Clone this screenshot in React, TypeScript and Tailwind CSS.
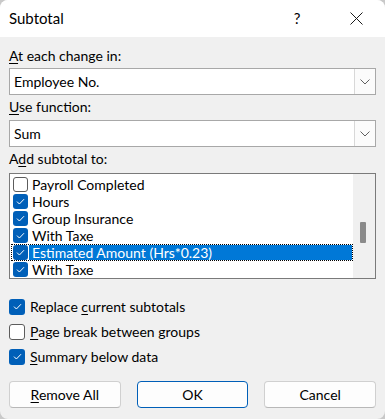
import React from 'react'

const font = { fontFamily: '"Segoe UI", Lato, "Noto Sans", sans-serif' }

function Check({ checked, size = 15 }: { checked: boolean; size?: number }) {
  const box = size === 16 ? 'w-[16px] h-[16px]' : 'w-[15px] h-[15px]'
  if (!checked)
    return <span className={`${box} block shrink-0 rounded-[3px] border border-[#5c5c5c] bg-white`} />
  return (
    <span className={`${box} shrink-0 rounded-[3px] bg-[#005fb8] flex items-center justify-center`}>
      <svg width="9" height="7" viewBox="0 0 9 7" fill="none">
        <path d="M1 3.6 L3.4 6 L8 1.2" stroke="white" strokeWidth="1" />
      </svg>
    </span>
  )
}

function Chevron() {
  return (
    <svg width="10" height="6" viewBox="0 0 10 6" fill="none">
      <path d="M0.5 0.5 L5 5 L9.5 0.5" stroke="#606060" strokeWidth="1" />
    </svg>
  )
}

function Dropdown({ value }: { value: string }) {
  return (
    <div className="h-[27px] flex border border-[#a8a8a8] bg-white">
      <div className="flex-1 flex items-center pl-[4px] text-[14px] text-black">{value}</div>
      <div className="w-[21px] flex items-center justify-center border-l border-[#d8d8d8] bg-[#fbfbfb]">
        <Chevron />
      </div>
    </div>
  )
}

const items = [
  { label: 'Payroll Completed', checked: false },
  { label: 'Hours', checked: true },
  { label: 'Group Insurance', checked: true },
  { label: 'With Taxe', checked: true },
  { label: 'Estimated Amount (Hrs*0.23)', checked: true, selected: true },
  { label: 'With Taxe', checked: true },
]

export default function App() {
  return (
    <div className="w-[385px] h-[419px] bg-[#c9c9c9]" style={font}>
      <div className="h-full rounded-[8px] overflow-hidden bg-[#f0f0f0] flex flex-col text-black">
        <div className="h-[37px] shrink-0 bg-white flex items-center pl-[9px]">
          <span className="text-[15px] flex-1">Subtotal</span>
          <span className="text-[15px] w-[60px] text-center pl-[4px]">?</span>
          <span className="w-[60px] flex justify-center pl-[2px]">
            <svg width="13" height="13" viewBox="0 0 13 13" fill="none">
              <path d="M0.5 0.5 L12.5 12.5 M12.5 0.5 L0.5 12.5" stroke="#1a1a1a" strokeWidth="1" />
            </svg>
          </span>
        </div>

        <div className="px-[9px] text-[14px] leading-[20px]">
          <div className="mt-[9px]"><span className="underline underline-offset-2">A</span>t each change in:</div>
          <div className="mt-[2px]"><Dropdown value="Employee No." /></div>

          <div className="mt-[2px]"><span className="underline underline-offset-2">U</span>se function:</div>
          <div className="mt-[3px]"><Dropdown value="Sum" /></div>

          <div className="mt-[2px]">A<span className="underline underline-offset-2">d</span>d subtotal to:</div>
          <div className="mt-[4px] h-[106px] border border-[#7a7a7a] bg-white flex">
            <div className="flex-1 pt-[2px] pl-[1px]">
              {items.map((it, i) => (
                <div
                  key={i}
                  className={`h-[17px] flex items-center ${it.selected ? 'border border-dotted border-black' : 'border border-transparent'}`}
                >
                  <span className="ml-[1px]"><Check checked={it.checked} /></span>
                  <span
                    className={`flex-1 h-full flex items-center pl-[3px] ml-[1px] leading-[17px] ${it.selected ? 'bg-[#0078d7] text-white' : ''}`}
                  >
                    {it.label}
                  </span>
                </div>
              ))}
            </div>
            <div className="w-[22px] bg-[#f0f0f0] relative">
              <div className="absolute left-[7px] top-[48px] w-[6px] h-[21px] rounded-[1px] bg-[#8a8a8a]" />
            </div>
          </div>

          <div className="mt-[15px] flex flex-col">
            <div className="h-[25px] flex items-center gap-[5px]">
              <Check checked size={16} />
              <span>Replace <span className="underline underline-offset-2">c</span>urrent subtotals</span>
            </div>
            <div className="h-[25px] flex items-center gap-[5px]">
              <Check checked={false} size={16} />
              <span><span className="underline underline-offset-2">P</span>age break between groups</span>
            </div>
            <div className="h-[25px] flex items-center gap-[5px]">
              <Check checked size={16} />
              <span><span className="underline underline-offset-2">S</span>ummary below data</span>
            </div>
          </div>

          <div className="mt-[12px] flex gap-[16px]">
            <button className="w-[112px] h-[27px] rounded-[4px] border border-[#d0d0d0] border-b-[#b8b8b8] bg-[#fdfdfd]">
              <span className="underline underline-offset-2">R</span>emove All
            </button>
            <button className="w-[112px] h-[27px] rounded-[4px] border border-[#005fb8] bg-[#fdfdfd]">OK</button>
            <button className="w-[112px] h-[27px] rounded-[4px] border border-[#d0d0d0] border-b-[#b8b8b8] bg-[#fdfdfd]">Cancel</button>
          </div>
        </div>
      </div>
    </div>
  )
}
